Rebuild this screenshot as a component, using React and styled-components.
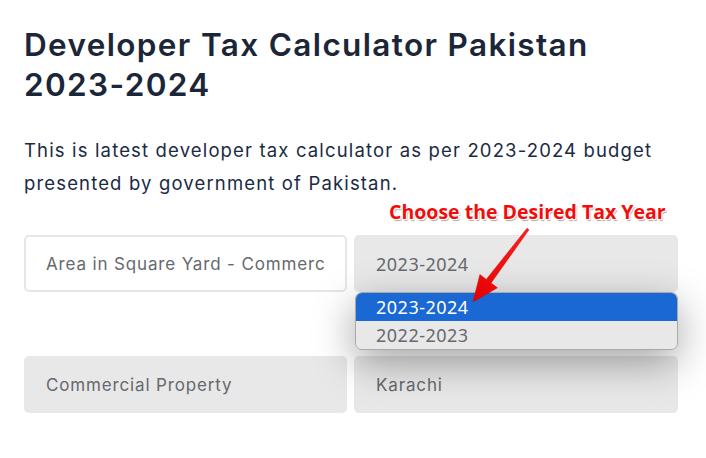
import React from "react";
import styled, { createGlobalStyle } from "styled-components";

const Global = createGlobalStyle`
  html, body { margin: 0; padding: 0; background: #ffffff; }
  body { font-family: Inter, "Open Sans", sans-serif; }
`;

const Page = styled.div`
  padding: 25px 28px 0 24px;
`;

const Title = styled.h1`
  margin: 0;
  font-family: Inter, sans-serif;
  font-weight: 600;
  font-size: 31.5px;
  line-height: 40px;
  color: #1c2639;
  letter-spacing: 1.35px;
`;

const Intro = styled.p`
  margin: 29px 0 0 0;
  font-family: Inter, sans-serif;
  font-weight: 400;
  font-size: 18.5px;
  line-height: 33px;
  color: #1b2a44;
  letter-spacing: 1.15px;
`;

const Form = styled.div`
  position: relative;
  margin-top: 35px;
  display: grid;
  grid-template-columns: 323px 324px;
  column-gap: 7px;
  row-gap: 64px;
`;

const Cell = styled.div`
  position: relative;
`;

const Field = styled.div`
  height: 57px;
  box-sizing: border-box;
  border-radius: 5px;
  display: flex;
  align-items: center;
  padding-left: ${(p) => (p.$white ? "20px" : "22px")};
  font-family: ${(p) => (p.$system ? '"Noto Sans", sans-serif' : "Inter, sans-serif")};
  font-size: ${(p) => (p.$system ? "18px" : "17px")};
  letter-spacing: ${(p) => (p.$system ? "0.5px" : "0.85px")};
  color: #66696e;
  background: ${(p) => (p.$white ? "#ffffff" : "#e8e8e8")};
  border: ${(p) => (p.$white ? "2px solid #e6e6e6" : "none")};
  white-space: nowrap;
  overflow: hidden;
`;

const Menu = styled.div`
  position: absolute;
  left: 1px;
  top: 57px;
  width: 323px;
  box-sizing: border-box;
  border: 1px solid #a9a9a9;
  border-radius: 7px;
  overflow: hidden;
  background: #e8e8e8;
  box-shadow: 0 12px 40px rgba(0, 0, 0, 0.36);
  z-index: 2;
`;

const Option = styled.div`
  height: 28px;
  display: flex;
  align-items: center;
  padding-left: 20px;
  font-family: "Noto Sans", sans-serif;
  font-size: 18px;
  letter-spacing: 0.5px;
  color: ${(p) => (p.$active ? "#ffffff" : "#66696e")};
  background: ${(p) => (p.$active ? "#1a68d3" : "#e8e8e8")};
`;

const Callout = styled.div`
  position: absolute;
  left: 35px;
  top: -37px;
  font-family: "Open Sans", sans-serif;
  font-weight: 700;
  font-size: 19.5px;
  color: #f20d0d;
  white-space: nowrap;
  text-shadow:
    -1px -1px 0 #fff, 1px -1px 0 #fff, -1px 1px 0 #fff, 1px 1px 0 #fff,
    1.5px 2px 1px rgba(0, 0, 0, 0.35);
  z-index: 3;
`;

const ArrowSvg = styled.svg`
  position: absolute;
  left: 100px;
  top: -8px;
  width: 80px;
  height: 80px;
  z-index: 4;
  overflow: visible;
`;

function Arrow() {
  return (
    <ArrowSvg viewBox="0 0 80 80">
      <defs>
        <linearGradient id="ag" x1="1" y1="0" x2="0" y2="1">
          <stop offset="0" stopColor="#ff2020" />
          <stop offset="1" stopColor="#e40000" />
        </linearGradient>
      </defs>
      <polygon
        points="19,75 25.9,47.6 32.25,52.4 73.04,1.28 74.96,2.72 37.05,56 43.4,60.8"
        fill="url(#ag)"
        stroke="#d00000"
        strokeWidth="0.5"
        strokeLinejoin="round"
      />
    </ArrowSvg>
  );
}

export default function App() {
  return (
    <>
      <Global />
      <Page>
        <Title>
          Developer Tax Calculator Pakistan
          <br />
          2023-2024
        </Title>
        <Intro>
          This is latest developer tax calculator as per 2023-2024 budget
          <br />
          presented by government of Pakistan.
        </Intro>
        <Form>
          <Cell>
            <Field $white>Area in Square Yard - Commerc</Field>
          </Cell>
          <Cell>
            <Callout>Choose the Desired Tax Year</Callout>
            <Field $system>2023-2024</Field>
            <Menu>
              <Option $active>2023-2024</Option>
              <Option>2022-2023</Option>
            </Menu>
            <Arrow />
          </Cell>
          <Cell>
            <Field>Commercial Property</Field>
          </Cell>
          <Cell>
            <Field>Karachi</Field>
          </Cell>
        </Form>
      </Page>
    </>
  );
}
